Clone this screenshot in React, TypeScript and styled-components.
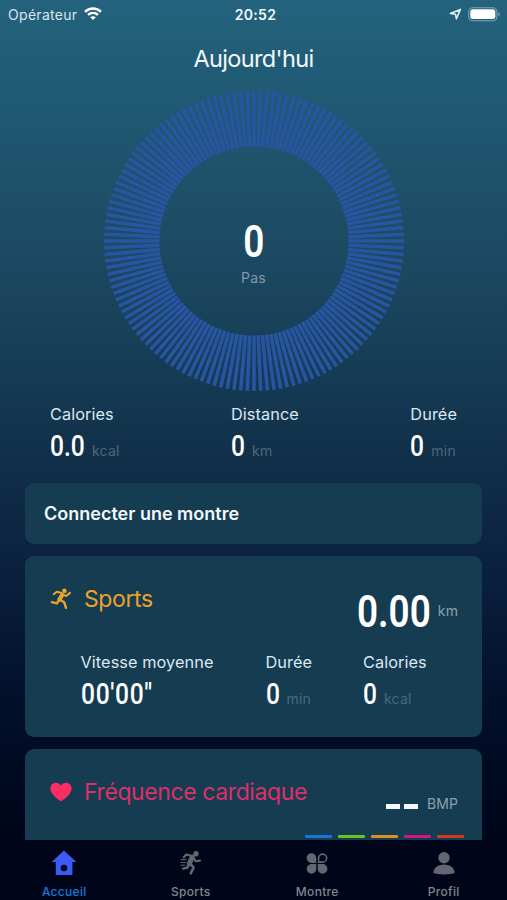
import React from "react";
import styled, { createGlobalStyle } from "styled-components";

const GlobalStyle = createGlobalStyle`
  * { box-sizing: border-box; }
  body { margin: 0; background: #000519; }
`;

const Screen = styled.div`
  width: 507px;
  height: 900px;
  overflow: hidden;
  display: flex;
  flex-direction: column;
  color: #f2f7fb;
  font-family: Inter, "Liberation Sans", sans-serif;
  background: linear-gradient(
    180deg,
    #24637d 0px,
    #205a74 90px,
    #1c4a62 250px,
    #163c55 370px,
    #12304a 450px,
    #0b2340 555px,
    #041530 660px,
    #000c24 750px,
    #000519 840px
  );
`;

const StatusBar = styled.header`
  height: 28px;
  padding: 0 7px 0 8px;
  display: grid;
  grid-template-columns: 1fr auto 1fr;
  align-items: center;
  font-size: 14px;
  flex: none;
`;

const Carrier = styled.div`
  display: flex;
  align-items: center;
  gap: 7px;
  letter-spacing: 0.3px;
  color: #d8e6ee;
`;

const Clock = styled.div`
  padding-left: 3px;
  font-weight: 600;
  letter-spacing: 0.3px;
`;

const StatusIcons = styled.div`
  display: flex;
  justify-content: flex-end;
  align-items: center;
  gap: 6px;
`;

const Title = styled.h1`
  margin: 13px 0 0;
  height: 36px;
  line-height: 36px;
  text-align: center;
  font-size: 23.5px;
  font-weight: 400;
  letter-spacing: -0.65px;
  flex: none;
`;

const Dial = styled.section`
  display: grid;
  place-items: center;
  height: 300px;
  margin-top: 14px;
  flex: none;
  > * { grid-area: 1 / 1; }
`;

const DialReadout = styled.div`
  display: flex;
  flex-direction: column;
  align-items: center;
  padding-top: 25px;
`;

const Digits = styled.span<{ $size: number; $weight?: number; $width?: number; $spacing?: number }>`
  display: inline-block;
  font-family: Roboto, sans-serif;
  font-weight: ${(p) => p.$weight ?? 500};
  font-size: ${(p) => p.$size}px;
  letter-spacing: ${(p) => p.$spacing ?? 0}px;
  line-height: 1;
  width: ${(p) => (p.$width ? `${p.$width}px` : "auto")};
  white-space: nowrap;
  transform: scaleX(0.82);
  transform-origin: ${(p) => (p.$width ? "left" : "center")} center;
  color: #fff;
`;

const DialUnit = styled.div`
  margin-top: 4px;
  height: 20px;
  line-height: 20px;
  font-size: 14px;
  letter-spacing: 0.2px;
  color: #8199a7;
`;

const Summary = styled.section`
  display: flex;
  justify-content: space-between;
  padding: 0 50px;
  margin-top: 13px;
  height: 79px;
  flex: none;
`;

const StatBox = styled.div<{ $width?: number }>`
  width: ${(p) => (p.$width ? `${p.$width}px` : "auto")};
`;

const StatLabel = styled.div`
  height: 20px;
  line-height: 20px;
  font-size: 16.3px;
  letter-spacing: 0.08px;
  white-space: nowrap;
  color: #dce8ef;
`;

const StatValue = styled.div`
  display: flex;
  align-items: baseline;
  margin-top: 7px;
`;

const Unit = styled.span`
  font-size: 14px;
  letter-spacing: 0.2px;
  color: #4b687e;
`;

const Card = styled.section<{ $height: number; $open?: boolean }>`
  width: 457px;
  height: ${(p) => p.$height}px;
  margin: 0 0 ${(p) => (p.$open ? 0 : 12)}px 25px;
  border-radius: ${(p) => (p.$open ? "9px 9px 0 0" : "9px")};
  background: #163c52;
  flex: none;
`;

const ConnectCard = styled(Card)`
  display: flex;
  align-items: center;
  padding: 0 19px;
  font-size: 18px;
  font-weight: 600;
`;

const CardHead = styled.div`
  display: flex;
  height: 86px;
  padding: 0 24px 0 25px;
`;

const CardTitle = styled.h2<{ $color: string }>`
  margin: 25px auto 0 0;
  height: 36px;
  display: flex;
  align-items: center;
  gap: 12px;
  font-size: 23px;
  font-weight: 400;
  letter-spacing: -0.4px;
  white-space: nowrap;
  color: ${(p) => p.$color};
`;

const IconSlot = styled.span`
  width: 22px;
  display: flex;
  justify-content: center;
`;

const Reading = styled.div`
  display: flex;
  align-items: center;
  height: 44px;
  margin-top: 33px;
`;

const ReadingUnit = styled.span`
  font-size: 14px;
  line-height: 18px;
  letter-spacing: 0.1px;
  color: #8da0ad;
`;

const SportStats = styled.div`
  display: flex;
  padding: 10px 0 0 55.5px;
`;

const Dashes = styled.div`
  display: flex;
  gap: 4px;
  margin: 55px 9px 0 0;
`;

const Dash = styled.span`
  width: 14px;
  height: 5px;
  background: #f4f9fb;
`;

const HeartUnit = styled(ReadingUnit)`
  margin-top: 46px;
`;

const Zones = styled.div`
  display: flex;
  gap: 6px;
  padding-left: 280px;
`;

const Zone = styled.span<{ $color: string }>`
  width: 27px;
  height: 3px;
  border-radius: 1px;
  background: ${(p) => p.$color};
`;

const TabBar = styled.nav`
  height: 60px;
  display: grid;
  grid-template-columns: repeat(4, 126.5px);
  padding-left: 1px;
  background: #000519;
  flex: none;
`;

const Tab = styled.a<{ $active?: boolean }>`
  display: flex;
  flex-direction: column;
  align-items: center;
  padding-top: 10px;
  font-size: 12px;
  font-weight: 500;
  letter-spacing: 0.3px;
  line-height: 15px;
  gap: 8px;
  color: ${(p) => (p.$active ? "#147bdd" : "#85858f")};
`;

const WifiIcon = () => (
  <svg width="18" height="14" viewBox="0 0 17 13" fill="none" stroke="#fff" strokeWidth="2.3">
    <path d="M1 4.5C5.2.3 11.8.3 16 4.5M3.8 7.4C6.5 4.8 10.5 4.8 13.2 7.4" />
    <path d="M8.5 12.2 5.9 9.6Q8.5 7.5 11.1 9.6Z" fill="#fff" stroke="none" />
  </svg>
);

const LocationIcon = () => (
  <svg width="13" height="13" viewBox="0 0 13 13" fill="none" stroke="#e3eef4" strokeWidth="1.6" strokeLinejoin="round">
    <path d="M1.4 5.4 11.4 1.4 7.4 10.8 6.5 6.2Z" />
  </svg>
);

const BatteryIcon = () => (
  <svg width="32" height="15" viewBox="0 0 32 15">
    <rect x=".7" y=".7" width="28.2" height="13" rx="4" fill="none" stroke="#7fa2b2" strokeWidth="1.1" />
    <rect x="2.3" y="2.3" width="25" height="9.8" rx="2.5" fill="#fff" />
    <path d="M30.3 5.1q1.4.7 1.4 2.1t-1.4 2.1Z" fill="#7fa2b2" />
  </svg>
);

const TICKS = 140;

const Ring = () => (
  <svg width="300" height="300" viewBox="-150 -150 300 300" stroke="#2855a2" strokeWidth="3.5">
    {Array.from({ length: TICKS }, (_, i) => (
      <line key={i} y1="-150" y2="-94.5" transform={`rotate(${(i * 360) / TICKS})`} />
    ))}
  </svg>
);

const RunnerIcon = () => (
  <svg width="22" height="22" viewBox="0 0 22 22" fill="none" stroke="#eda42b" strokeLinecap="round" strokeLinejoin="round">
    <circle cx="14.4" cy="2.9" r="2.3" fill="#eda42b" stroke="none" />
    <path d="M12.2 7 9.4 11.6" strokeWidth="4.2" />
    <path d="M11.6 5 6.8 3.7 3.7 6.2M12.8 6.6 16.2 8 20 4.9" strokeWidth="2.1" />
    <path d="M9.5 11.5 14.2 14.3 16 19.8M8.8 12.4 6.9 15.3 1.9 14.2" strokeWidth="2.4" />
  </svg>
);

const HeartIcon = () => (
  <svg width="22" height="20" viewBox="0 0 22 20" fill="#fb2d63">
    <path d="M11 19.3C8.4 17.5.4 12.5.4 6.4.4 3 2.8.7 5.8.7 8.2.7 10 2 11 3.7 12 2 13.8.7 16.2.7c3 0 5.4 2.3 5.4 5.7 0 6.1-8 11.1-10.6 12.9Z" />
  </svg>
);

const HomeIcon = () => (
  <svg width="26" height="26" viewBox="0 0 26 26" fill="#3d59f7">
    <path fillRule="evenodd" d="M13 .6 25.3 12.1H21.4V25H4.8V12.1H.7ZM13 14.7a3.3 3.3 0 1 0 0 6.6 3.3 3.3 0 0 0 0-6.6Z" />
  </svg>
);

const SprintIcon = () => (
  <svg width="26" height="26" viewBox="0 0 26 26" fill="none" stroke="#666673" strokeLinecap="round" strokeLinejoin="round">
    <circle cx="18" cy="3.8" r="2.7" fill="#666673" stroke="none" />
    <path d="M14.3 7 11.4 13.6" strokeWidth="5" />
    <path d="M13 5.7 8.3 4.4 5.8 7.3M15.3 7.7 17.6 11.2 22 10.6" strokeWidth="2.1" />
    <path d="M12 13.6 15.6 17.4 12.8 23.4M10.8 14.8 9 17.8 5.2 18.6" strokeWidth="2.5" />
    <path d="M3 9.6H8.2M3 12.4H7.8M3 15.2H7" strokeWidth="1" />
  </svg>
);

const WatchFacesIcon = () => (
  <svg width="22" height="26" viewBox="0 0 22 26" fill="#666673">
    <path d="M5.4 3.3a4.9 4.9 0 0 1 4.9 4.9v4.7H5.4a4.8 4.8 0 0 1 0-9.6ZM5.4 14.1h4.9v4.7a4.8 4.8 0 1 1-4.9-4.7ZM11.8 14.1h4.8a4.8 4.8 0 1 1-4.8 4.7Z" />
    <path d="M12.6 12.1V8a4 4 0 1 1 4 4.1Z" fill="none" stroke="#666673" strokeWidth="1.6" />
  </svg>
);

const ProfileIcon = () => (
  <svg width="22" height="26" viewBox="0 0 22 26" fill="#666673">
    <circle cx="11" cy="7.7" r="5.7" />
    <path d="M.4 23.1c0-5 4.6-8.5 10.6-8.5s10.6 3.5 10.6 8.5q-3.5 1.3-10.6 1.3T.4 23.1Z" />
  </svg>
);

type StatProps = {
  label: string;
  value: string;
  unit?: string;
  digitsWidth: number;
  width?: number;
  spacing?: number;
};

const Stat = ({ label, value, unit, digitsWidth, width, spacing }: StatProps) => (
  <StatBox $width={width}>
    <StatLabel>{label}</StatLabel>
    <StatValue>
      <Digits $size={30} $width={digitsWidth} $spacing={spacing}>{value}</Digits>
      {unit && <Unit>{unit}</Unit>}
    </StatValue>
  </StatBox>
);

const ZONE_COLORS = ["#1876d5", "#64c520", "#d9901e", "#d41482", "#cc3b1d"];

export default function App() {
  return (
    <>
      <GlobalStyle />
      <Screen>
        <StatusBar>
          <Carrier>Opérateur<WifiIcon /></Carrier>
          <Clock>20:52</Clock>
          <StatusIcons><LocationIcon /><BatteryIcon /></StatusIcons>
        </StatusBar>
        <Title>Aujourd'hui</Title>
        <Dial>
          <Ring />
          <DialReadout>
            <Digits $size={45} $weight={600}>0</Digits>
            <DialUnit>Pas</DialUnit>
          </DialReadout>
        </Dial>
        <Summary>
          <Stat label="Calories" value="0.0" unit="kcal" digitsWidth={42} />
          <Stat label="Distance" value="0" unit="km" digitsWidth={21} />
          <Stat label="Durée" value="0" unit="min" digitsWidth={21} />
        </Summary>
        <ConnectCard $height={61}>Connecter une montre</ConnectCard>
        <Card $height={181}>
          <CardHead>
            <CardTitle $color="#e9a32b">
              <IconSlot><RunnerIcon /></IconSlot>Sports
            </CardTitle>
            <Reading>
              <Digits $size={45} $weight={600} $width={81}>0.00</Digits>
              <ReadingUnit>km</ReadingUnit>
            </Reading>
          </CardHead>
          <SportStats>
            <Stat label="Vitesse moyenne" value={"00'00\""} digitsWidth={80} width={185} spacing={0.8} />
            <Stat label="Durée" value="0" unit="min" digitsWidth={21} width={97.5} />
            <Stat label="Calories" value="0" unit="kcal" digitsWidth={21} />
          </SportStats>
        </Card>
        <Card $height={91} $open>
          <CardHead>
            <CardTitle $color="#dc3068">
              <IconSlot><HeartIcon /></IconSlot>Fréquence cardiaque
            </CardTitle>
            <Dashes><Dash /><Dash /></Dashes>
            <HeartUnit>BMP</HeartUnit>
          </CardHead>
          <Zones>{ZONE_COLORS.map((c) => <Zone key={c} $color={c} />)}</Zones>
        </Card>
        <TabBar>
          <Tab $active><HomeIcon />Accueil</Tab>
          <Tab><SprintIcon />Sports</Tab>
          <Tab><WatchFacesIcon />Montre</Tab>
          <Tab><ProfileIcon />Profil</Tab>
        </TabBar>
      </Screen>
    </>
  );
}
